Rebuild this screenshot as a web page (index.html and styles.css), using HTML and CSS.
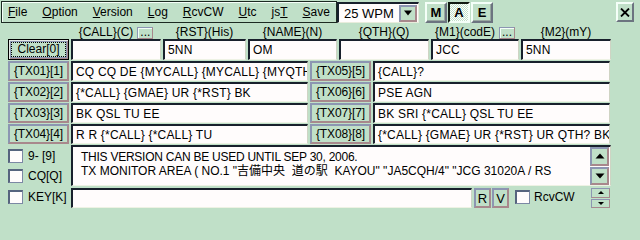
FILE: index.html
```html
<!DOCTYPE html>
<html lang="ja">

<head>
	<meta charset="UTF-8">
	<meta name="viewport" content="width=device-width, initial-scale=1.0">
	<title>CW keyer</title>

	<link rel="stylesheet" href="styles.css">
</head>

<body>
	<div class="app">
		<div class="topbar">
			<div class="menubar">
				<span class="menu"><u>F</u>ile</span>
				<span class="menu"><u>O</u>ption</span>
				<span class="menu"><u>V</u>ersion</span>
				<span class="menu"><u>L</u>og</span>
				<span class="menu"><u>R</u>cvCW</span>
				<span class="menu"><u>U</u>tc</span>
				<span class="menu">js<u>T</u></span>
				<span class="menu"><u>S</u>ave</span>
			</div>
			<div class="combo">
				<span class="combo-text">25 WPM</span>
				<span class="combo-btn">
					<svg width="10" height="6" viewBox="0 0 10 6"><path d="M1 0.5h8L5 5.5z" fill="#000"/></svg>
				</span>
			</div>
			<div class="modes">
				<span class="mode">M</span>
				<span class="mode pressed">A</span>
				<span class="mode">E</span>
			</div>
			<span class="close">
				<svg width="10" height="9" viewBox="0 0 10 9"><path d="M1 0.5l8 8M9 0.5l-8 8" stroke="#000" stroke-width="1.8"/></svg>
			</span>
		</div>

		<div class="fields">
			<div class="label col-call"><span>{CALL}(C)</span><span class="dots">...</span></div>
			<div class="label col-rst"><span>{RST}(His)</span></div>
			<div class="label col-name"><span>{NAME}(N)</span></div>
			<div class="label col-qth"><span>{QTH}(Q)</span></div>
			<div class="label col-m1"><span>{M1}(codE)</span><span class="dots">...</span></div>
			<div class="label col-m2"><span>{M2}(mY)</span></div>

			<button class="clear"><span class="focus">Clear[0]</span></button>
			<div class="edit"></div>
			<div class="edit">5NN</div>
			<div class="edit">OM</div>
			<div class="edit"></div>
			<div class="edit">JCC</div>
			<div class="edit">5NN</div>
		</div>

		<div class="tx-grid">
			<span class="btn tx">{TX01}[1]</span>
			<div class="edit">CQ CQ DE {MYCALL} {MYCALL} {MYQTH}</div>
			<span class="btn tx">{TX05}[5]</span>
			<div class="edit">{CALL}?</div>

			<span class="btn tx">{TX02}[2]</span>
			<div class="edit">{*CALL} {GMAE} UR {*RST} BK</div>
			<span class="btn tx">{TX06}[6]</span>
			<div class="edit">PSE AGN</div>

			<span class="btn tx">{TX03}[3]</span>
			<div class="edit">BK QSL TU EE</div>
			<span class="btn tx">{TX07}[7]</span>
			<div class="edit">BK SRI {*CALL} QSL TU EE</div>

			<span class="btn tx">{TX04}[4]</span>
			<div class="edit">R R {*CALL} {*CALL} TU</div>
			<span class="btn tx">{TX08}[8]</span>
			<div class="edit">{*CALL} {GMAE} UR {*RST} UR QTH? BK</div>
		</div>

		<div class="bottom">
			<div class="checks">
				<label class="check-row"><span class="check"></span>9- [9]</label>
				<label class="check-row"><span class="check"></span>CQ[Q]</label>
			</div>
			<div class="monitor">
				<div class="monitor-text"><span class="line1">THIS VERSION CAN BE USED UNTIL SEP 30, 2006.</span>
TX MONITOR AREA ( NO.1 "吉備中央  道の駅  KAYOU" "JA5CQH/4" "JCG 31020A / RS</div>
				<div class="scroll">
					<span class="btn scroll-btn"><svg width="10" height="6" viewBox="0 0 10 6"><path d="M5 0.5L9.5 5.5h-9z" fill="#000"/></svg></span>
					<span class="btn scroll-btn"><svg width="10" height="6" viewBox="0 0 10 6"><path d="M0.5 0.5h9L5 5.5z" fill="#000"/></svg></span>
				</div>
			</div>

			<div class="checks key">
				<label class="check-row"><span class="check"></span>KEY[K]</label>
			</div>
			<div class="key-row">
				<div class="edit key-input"></div>
				<span class="btn small r">R</span>
				<span class="btn small v">V</span>
				<label class="check-row rcv"><span class="check"></span>RcvCW</label>
				<div class="spin">
					<span class="btn spin-btn"><svg width="6" height="3" viewBox="0 0 6 3"><path d="M3 0L6 3H0z" fill="#000"/></svg></span>
					<span class="btn spin-btn"><svg width="6" height="3" viewBox="0 0 6 3"><path d="M0 0h6L3 3z" fill="#000"/></svg></span>
				</div>
			</div>
		</div>
	</div>
</body>

</html>
```

FILE: styles.css
```css
* {
	box-sizing: border-box;
}

body {
	margin: 0;
	background-color: #c0e0c8;
	color: #000;
	font: 12px "Liberation Sans", Arial, "Noto Sans CJK JP", sans-serif;
}

.app {
	width: 640px;
	height: 240px;
	padding-top: 1px;
	overflow: hidden;
}

/* 상단 메뉴 줄 */
.topbar {
	display: flex;
	height: 22px;
	padding-left: 1px;
}

.menubar {
	display: flex;
	flex: none;
	align-items: center;
	width: 336px;
	border: 1px solid #1c2a22;
	box-shadow: inset 1px 1px 0 #f4fff8;
	overflow: hidden;
}

.menu {
	flex: none;
	padding: 0 7.5px;
	line-height: 14px;
}

.menu:first-child {
	padding-left: 6px;
}

.combo {
	display: flex;
	flex: none;
	align-items: center;
	width: 82px;
	height: 21px;
	margin-top: 1px;
	background-color: #fffcfc;
	border-top: 2px solid #18202c;
	border-left: 2px solid #18202c;
	border-right: 1px solid #e8ecdc;
	border-bottom: 1px solid #e8ecdc;
}

.combo-text {
	flex: 1;
	padding-left: 5px;
	font-size: 13px;
}

.combo-btn {
	display: flex;
	align-items: center;
	justify-content: center;
	width: 18px;
	height: 17px;
	margin-right: 1px;
	background-color: #c0e0c8;
	border: 2px solid;
	border-color: #8c96b2 #a8888c #a8888c #8c96b2;
}

.modes {
	display: flex;
	gap: 1px;
	margin-left: 6px;
	margin-top: 1px;
}

.mode {
	display: flex;
	align-items: center;
	justify-content: center;
	width: 22px;
	height: 21px;
	font-weight: bold;
	font-size: 13px;
	border: 2px solid;
	border-color: #f4fff8 #6c7480 #6c7480 #f4fff8;
	box-shadow: inset -1px -1px 0 #98a8a0;
}

.mode.pressed {
	border-color: #101810 #f4fff8 #f4fff8 #101810;
	box-shadow: none;
	background: repeating-conic-gradient(#ffffff 0 25%, #c0e0c8 0 50%) 0 0 / 2px 2px;
}

.close {
	display: flex;
	align-items: center;
	justify-content: center;
	width: 18px;
	height: 20px;
	margin: 1px 6px 0 auto;
	border: 2px solid;
	border-color: #f4fff8 #6c7480 #6c7480 #f4fff8;
}

/* 입력 칸 */
.fields {
	display: grid;
	grid-template-columns: 61px 90px 83px 89px 90px 88px 90px;
	grid-template-rows: 16px 21px;
	column-gap: 2px;
	padding-left: 8px;
}

.label {
	display: flex;
	align-items: flex-end;
	justify-content: center;
	gap: 4px;
	line-height: 13px;
	white-space: nowrap;
}

.col-call { grid-column: 2; }
.col-rst { grid-column: 3; }
.col-name { grid-column: 4; }
.col-qth { grid-column: 5; }
.col-m1 { grid-column: 6; }
.col-m2 { grid-column: 7; }

.dots {
	width: 16px;
	height: 12px;
	line-height: 8px;
	text-align: center;
	border: 1px solid;
	border-color: #8c96b2 #a8888c #a8888c #8c96b2;
	box-shadow: inset 1px 1px 0 #f4fff8;
}

.edit {
	height: 100%;
	padding: 2px 0 0 3px;
	overflow: hidden;
	white-space: nowrap;
	line-height: 15px;
	letter-spacing: 0.2px;
	background-color: #fffcfc;
	border-top: 2px solid #18202c;
	border-left: 2px solid #18202c;
	border-right: 1px solid #cfd4c4;
	border-bottom: 1px solid #eef2e4;
}

.clear {
	grid-column: 1;
	padding: 2px;
	font: inherit;
	background-color: #c0e0c8;
	border: 1px solid #000;
	box-shadow: inset 1px 1px 0 #e8ece8, inset -1px -1px 0 #a8888c, inset 2px 2px 0 #8c96b2, inset -2px -2px 0 #8c96b2;
}

.focus {
	display: block;
	height: 100%;
	line-height: 13px;
	border: 1px dotted #000;
}

/* TX 버튼 줄 */
.tx-grid {
	display: grid;
	grid-template-columns: 61px 237px 61px 237px;
	grid-auto-rows: 20px;
	column-gap: 2px;
	row-gap: 1px;
	padding-left: 8px;
	margin-top: 1px;
}

.btn {
	display: flex;
	align-items: center;
	justify-content: center;
	background-color: #c0e0c8;
	border: 2px solid;
	border-color: #8c96b2 #a8888c #a8888c #8c96b2;
	white-space: nowrap;
}

.tx {
	letter-spacing: -0.1px;
}

/* 하단 영역 */
.bottom {
	display: grid;
	grid-template-columns: 61px 540px;
	grid-template-rows: 41px 20px;
	column-gap: 2px;
	row-gap: 2px;
	padding-left: 8px;
	margin-top: 1px;
}

.checks {
	display: flex;
	flex-direction: column;
	gap: 6px;
	padding-top: 4px;
}

.checks.key {
	padding-top: 2px;
}

.check-row {
	display: flex;
	align-items: center;
	gap: 5px;
	height: 14px;
	white-space: nowrap;
}

.check {
	width: 15px;
	height: 14px;
	background-color: #fffcfc;
	border-top: 2px solid #56647e;
	border-left: 2px solid #56647e;
	border-right: 1px solid #7c88a4;
	border-bottom: 1px solid #7c88a4;
}

.monitor {
	display: flex;
	background-color: #fffcfc;
	border-top: 2px solid #18202c;
	border-left: 2px solid #18202c;
	border-right: 1px solid #cfd4c4;
	border-bottom: 1px solid #eef2e4;
}

.monitor-text {
	flex: 1;
	padding: 3px 0 0 8px;
	line-height: 14px;
	white-space: pre;
	overflow: hidden;
}

.line1 {
	letter-spacing: -0.25px;
}

.scroll {
	display: flex;
	flex-direction: column;
	gap: 1px;
	width: 19px;
	margin: 0 1px 0 0;
}

.scroll-btn {
	height: 19px;
}

.key-row {
	display: flex;
	align-items: stretch;
}

.key-input {
	width: 401px;
	flex: none;
}

.small {
	width: 17px;
	font-size: 13px;
}

.r {
	margin-left: 2px;
}

.v {
	margin-left: 1px;
}

.rcv {
	margin-left: 6px;
	margin-top: 2px;
	gap: 4px;
}

.spin {
	display: flex;
	flex-direction: column;
	gap: 1px;
	width: 19px;
	margin: 0 1px 0 auto;
}

.spin-btn {
	height: 10px;
	border-width: 1px;
}
```
